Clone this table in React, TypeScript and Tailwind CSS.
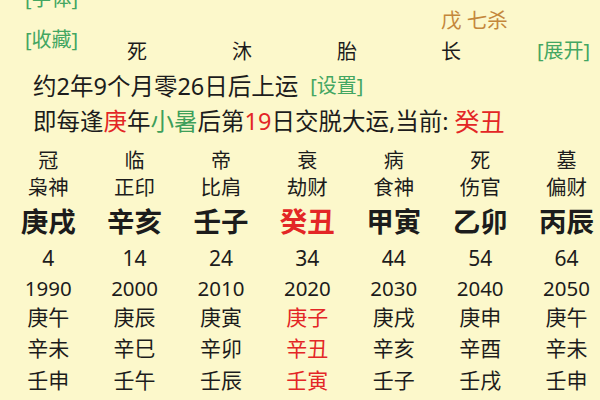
import React from 'react';

interface Pillar {
  stage: string;
  god: string;
  gz: string;
  age: number;
  year: number;
  years: string[];
  current?: boolean;
}

const pillars: Pillar[] = [
  { stage: '冠', god: '枭神', gz: '庚戌', age: 4, year: 1990, years: ['庚午', '辛未', '壬申'] },
  { stage: '临', god: '正印', gz: '辛亥', age: 14, year: 2000, years: ['庚辰', '辛巳', '壬午'] },
  { stage: '帝', god: '比肩', gz: '壬子', age: 24, year: 2010, years: ['庚寅', '辛卯', '壬辰'] },
  { stage: '衰', god: '劫财', gz: '癸丑', age: 34, year: 2020, years: ['庚子', '辛丑', '壬寅'], current: true },
  { stage: '病', god: '食神', gz: '甲寅', age: 44, year: 2030, years: ['庚戌', '辛亥', '壬子'] },
  { stage: '死', god: '伤官', gz: '乙卯', age: 54, year: 2040, years: ['庚申', '辛酉', '壬戌'] },
  { stage: '墓', god: '偏财', gz: '丙辰', age: 64, year: 2050, years: ['庚午', '辛未', '壬申'] },
];

const Cell: React.FC<{ h: string; red?: boolean; className?: string; children: React.ReactNode }> = ({
  h,
  red,
  className = '',
  children,
}) => (
  <div className={`${h} flex items-center justify-center whitespace-nowrap ${red ? 'text-[#e32626]' : 'text-[#1c1c1c]'} ${className}`}>
    {children}
  </div>
);

export default function App() {
  return (
    <div className="w-[600px] h-[400px] overflow-hidden bg-[#fcf8cb] font-['Noto_Sans','Noto_Sans_CJK_SC',sans-serif] text-[#1c1c1c]">
      {/* cut-off header rows */}
      <div className="flex h-[20px] -mt-[11px] items-center leading-[20px]">
        <span className="ml-[25px] text-[20px] text-[#43a662]">[字体]</span>
        <span className="ml-[266px] -mt-[17px] text-[19px] text-[#b3a77e] tracking-[6px]">丁 正官　甲 食神</span>
      </div>
      <div className="flex h-[22px] items-center">
        <span className="ml-[441px] text-[20.5px] leading-[22px] text-[#c4873b]">戊 七杀</span>
      </div>

      <div className="flex h-[30px] items-start text-[20px] leading-[18px]">
        <div className="w-[127px] pl-[25px] text-[#43a662]">[收藏]</div>
        <div className="w-[105px] mt-[12px]">死</div>
        <div className="w-[105px] mt-[12px]">沐</div>
        <div className="w-[104px] mt-[12px]">胎</div>
        <div className="w-[96px] mt-[12px]">长</div>
        <div className="mt-[11px] text-[#43a662]">[展开]</div>
      </div>

      <div className="mt-[11px] h-[28px] flex items-center pl-[33px] text-[23.5px] leading-[28px] whitespace-nowrap">
        <span>约2年9个月零26日后上运</span>
        <span className="ml-[12px] text-[20px] text-[#43a662]">[设置]</span>
      </div>

      <div className="mt-[7px] h-[28px] flex items-center pl-[33px] text-[23.5px] leading-[28px] whitespace-nowrap">
        <span>即每逢</span>
        <span className="text-[#e32626]">庚</span>
        <span>年</span>
        <span className="text-[#3e9f5a]">小暑</span>
        <span>后第</span>
        <span className="text-[#e32626]">19</span>
        <span>日交脱大运,当前: </span>
        <span className="ml-[6px] text-[25px] text-[#e32626]">癸丑</span>
      </div>

      <div className="mt-[12px] ml-[5px] grid grid-cols-[repeat(7,86.4px)]">
        {pillars.map((p) => (
          <div key={p.year} className="flex flex-col">
            <Cell h="h-[27px]" className="text-[20px]">{p.stage}</Cell>
            <Cell h="h-[27px]" className="text-[20.5px]">{p.god}</Cell>
            <Cell h="h-[42px]" red={p.current} className="text-[27.5px] font-bold">{p.gz}</Cell>
            <Cell h="h-[32px]" className="text-[21px]">{p.age}</Cell>
            <Cell h="h-[27px]" className="text-[20.5px]">{p.year}</Cell>
            <Cell h="h-[31px]" red={p.current} className="text-[21px]">{p.years[0]}</Cell>
            <Cell h="h-[32px]" red={p.current} className="text-[21px]">{p.years[1]}</Cell>
            <Cell h="h-[31px]" red={p.current} className="text-[21px]">{p.years[2]}</Cell>
          </div>
        ))}
      </div>
    </div>
  );
}
